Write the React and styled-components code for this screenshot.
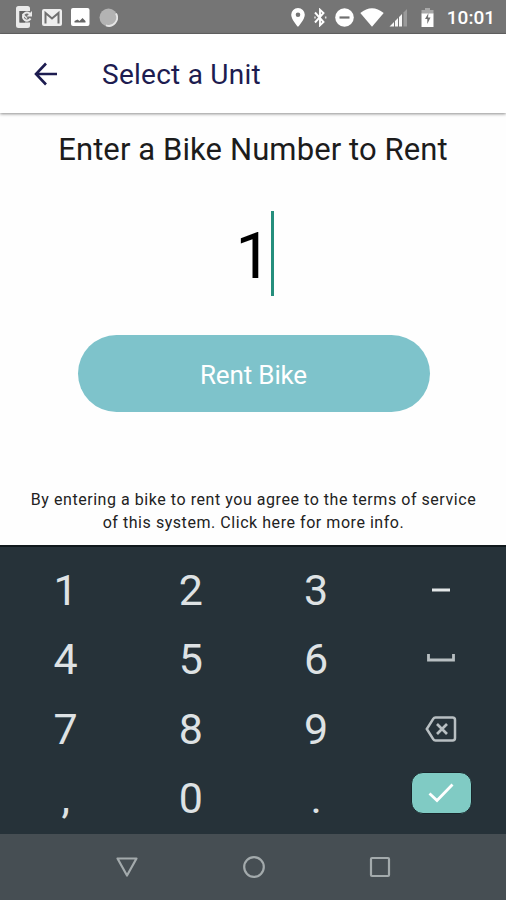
import React, {useState} from 'react'
import styled, {createGlobalStyle} from 'styled-components';

const Keys = [
  {key: '1'}, {key: '2'}, {key: '3'}, {key: 'minus'},
  {key: '4'}, {key: '5'}, {key: '6'}, {key: 'space'},
  {key: '7'}, {key: '8'}, {key: '9'}, {key: 'delete'},
  {key: ','}, {key: '0'}, {key: '.'}, {key: 'enter'}
]

const StatusBar = () => (
  <StatusWrap>
    <StatusIcons $gap='9px'>
      <svg width='17' height='22' viewBox='0 0 17 22'>
        <path d='M2.5 0H11.5Q14 0 14 2.5V5H3.5V16.5H14V19.5Q14 22 11.5 22H2.5Q0 22 0 19.5V2.5Q0 0 2.5 0Z' fill='#eaeaea' />
        <path d='M3.5 5H9V16.5H3.5Z' fill='#626262' />
        <path d='M14 8A4 4 0 1 0 14.5 12.500' fill='none' stroke='#eaeaea' strokeWidth='2' />
        <path d='M16 5V10.5H10.500Z' fill='#eaeaea' />
        <path d='M6.500 8L11 12.500' stroke='#eaeaea' strokeWidth='1.500' />
      </svg>
      <svg width='20' height='17' viewBox='0 0 20 17'>
        <rect width='20' height='17' rx='2' fill='#eee' />
        <path d='M3.500 14.500V4L10 9.500L16.500 4V14.500' fill='none' stroke='#707070' strokeWidth='2' />
      </svg>
      <svg width='19' height='18' viewBox='0 0 19 18'>
        <rect width='18.500' height='18' rx='2' fill='#fff' />
        <path d='M3.500 14.500V13L6.500 11.500L8.500 13L11.500 10L14.500 13V14.500Z' fill='#666' />
      </svg>
      <svg width='19' height='19' viewBox='0 0 19 19'>
        <circle cx='9.500' cy='9.500' r='9' fill='#b3b3b3' />
        <path d='M17 5.500A8.300 8.300 0 0 1 7 17.400' fill='none' stroke='#e6e6e6' strokeWidth='1.800' />
      </svg>
    </StatusIcons>
    <StatusIcons $gap='5px'>
      <StatusGlyph $after='3px' width='14' height='19' viewBox='0 0 14 19'>
        <path fillRule='evenodd' d='M7 0A6.800 6.800 0 0 1 13.800 6.800C13.800 11.500 7 19 7 19S.2 11.500 .2 6.800A6.800 6.800 0 0 1 7 0ZM7 4.500A2.300 2.300 0 1 0 7 9.100A2.300 2.300 0 1 0 7 4.500Z' fill='#fff' />
      </StatusGlyph>
      <StatusGlyph $after='3px' width='14' height='19' viewBox='0 0 14 19'>
        <path d='M2 4.500L10.500 14L7 17.300V1.700L10.500 5L2 14.500' fill='none' stroke='#fff' strokeWidth='1.900' />
        <path d='M2 8.500V10.500M12.700 8.500V10.500' stroke='#e5e5e5' strokeWidth='1.500' />
      </StatusGlyph>
      <StatusGlyph $after='1px' width='19' height='19' viewBox='0 0 19 19'>
        <circle cx='9.500' cy='9.500' r='9.300' fill='#fff' />
        <path d='M4.500 9.500H14.500' stroke='#6f6f6f' strokeWidth='2.200' />
      </StatusGlyph>
      <svg width='24' height='19' viewBox='0 0 24 19'>
        <path d='M.3 5Q12 -4.500 23.700 5L12 18.800Z' fill='#fff' />
      </svg>
      <StatusGlyph $after='8px' width='19' height='19' viewBox='0 0 19 19'>
        <path d='M.5 18.500L5 14V18.500ZM6 13L9 10V18.500H6ZM10 9L13 6V18.500H10Z' fill='#f7f7f7' />
        <path d='M14.500 4.500L18 1V18.500H14.500Z' fill='#9a9a9a' />
      </StatusGlyph>
      <StatusGlyph $after='8px' width='13' height='19' viewBox='0 0 13 19'>
        <path d='M4 0H9V2H12.500V6H.5V2H4Z' fill='#a8a8a8' />
        <path d='M.5 5.500H12.500V19H.5Z' fill='#fff' />
        <path d='M7.500 5L4 11H6.300V16L9.500 9.500H7Z' fill='#707070' />
      </StatusGlyph>
      <Clock>10:01</Clock>
    </StatusIcons>
  </StatusWrap>
)

const KeyLabel = ({name}) => {
  if(name === 'minus'){
    return (
      <svg width='18' height='4' viewBox='0 0 18 4'>
        <path d='M0 2H18' stroke='#e3e7e8' strokeWidth='3' />
      </svg>
    )
  }
  if(name === 'space'){
    return (
      <SpaceIcon width='28' height='8' viewBox='0 0 28 8'>
        <path d='M1.500 0V6H26.500V0' fill='none' stroke='#b8bfc2' strokeWidth='2.800' />
      </SpaceIcon>
    )
  }
  if(name === 'delete'){
    return (
      <svg width='32' height='26' viewBox='0 0 32 26'>
        <path d='M10.500 1.500H27.500Q30 1.500 30 4V22Q30 24.500 27.500 24.500H10.500Q9 24.500 8.200 23.200L1.800 13L8.200 2.800Q9 1.500 10.500 1.500Z' fill='none' stroke='#b8bfc2' strokeWidth='2.500' />
        <path d='M12 8L22 18M22 8L12 18' stroke='#b8bfc2' strokeWidth='2.700' />
      </svg>
    )
  }
  if(name === 'enter'){
    return (
      <EnterKey>
        <svg width='26' height='20' viewBox='0 0 26 20'>
          <path d='M1.500 10.500L9 17.500L24.500 1.500' fill='none' stroke='#fff' strokeWidth='2.800' />
        </svg>
      </EnterKey>
    )
  }
  return name
}

const App = () => {
  const [bike, setBike] = useState('1');

  const pressKey = (key) => {
    if(key === 'delete'){
      setBike(bike.slice(0, -1))
    } else if(key.length === 1){
      setBike(bike + key)
    }
  }

  return (
    <Screen>
      <GlobalStyle />
      <StatusBar />
      <Header>
        <svg width='24' height='24' viewBox='0 0 24 24'>
          <path d='M23 12H2.500M12 1.500L2 12L12 22.500' fill='none' stroke='#1d1c50' strokeWidth='2.600' />
        </svg>
        <h1>Select a Unit</h1>
      </Header>
      <Content>
        <h2>Enter a Bike Number to Rent</h2>
        <BikeNumber>
          <span>{bike}</span>
          <Caret />
        </BikeNumber>
        <RentButton type='button'>Rent Bike</RentButton>
        <Terms>
          By entering a bike to rent you agree to the terms of service<br />
          of this system. Click here for more info.
        </Terms>
      </Content>
      <Keypad>
        {Keys.map(({key})=>(
          <Key key={key} type='button' onClick={()=>pressKey(key)}>
            <KeyLabel name={key} />
          </Key>
        ))}
      </Keypad>
      <NavBar>
        <svg width='24' height='24' viewBox='0 0 24 24'>
          <path d='M2.500 3.500H21.500L12 20.500Z' fill='none' stroke='#a3aaac' strokeWidth='2.200' strokeLinejoin='round' />
        </svg>
        <svg width='24' height='24' viewBox='0 0 24 24'>
          <circle cx='12' cy='12' r='9.800' fill='none' stroke='#a3aaac' strokeWidth='2.200' />
        </svg>
        <svg width='24' height='24' viewBox='0 0 24 24'>
          <rect x='3' y='3' width='18' height='18' rx='1' fill='none' stroke='#a3aaac' strokeWidth='2.200' />
        </svg>
      </NavBar>
    </Screen>
  )
}

export default App

const GlobalStyle = createGlobalStyle`
  *{
    box-sizing: border-box;
  }

  body{
    margin: 0;
    background: #fff;
  }

  svg{
    display: block;
    flex: none;
  }
`;

const Screen = styled.main`
  width: 506px;
  height: 900px;
  display: flex;
  flex-direction: column;
  overflow: hidden;
  background: #fefefe;
  font-family: Roboto, 'Liberation Sans', sans-serif;
`;

const StatusWrap = styled.div`
  height: 34px;
  flex: none;
  display: flex;
  align-items: center;
  justify-content: space-between;
  padding: 1px 11px 0 16px;
  background: #757575;
  border-bottom: 1px solid #666;
`;

const StatusIcons = styled.div`
  display: flex;
  align-items: center;
  gap: ${props => props.$gap};
`;

const StatusGlyph = styled.svg`
  margin-right: ${props => props.$after};
`;

const Clock = styled.span`
  padding-top: 2px;
  color: #fff;
  font-size: 19px;
  font-weight: 500;
  line-height: 24px;
`;

const Header = styled.header`
  height: 79px;
  flex: none;
  display: flex;
  align-items: center;
  gap: 44px;
  padding: 0 34px;
  background: #fff;
  box-shadow: 0 1px 3px rgba(0, 0, 0, 0.45);

  h1{
    margin: 3px 0 0;
    color: #1d1c50;
    font-size: 28px;
    font-weight: 400;
    letter-spacing: 0.25px;
    line-height: 32px;
  }
`;

const Content = styled.section`
  height: 432px;
  flex: none;
  display: flex;
  flex-direction: column;
  align-items: center;

  h2{
    margin: 18px 0 0;
    color: #1c1c1c;
    font-size: 31px;
    font-weight: 400;
    letter-spacing: 0.1px;
    line-height: 38px;
    white-space: nowrap;
  }
`;

const BikeNumber = styled.div`
  height: 85px;
  margin: 42px 0 0 4px;
  display: flex;
  align-items: center;
  color: #000;
  font-size: 64px;
  line-height: 85px;

  span{
    padding-top: 5px;
  }
`;

const Caret = styled.i`
  width: 3px;
  height: 85px;
  background: #258e7c;
`;

const RentButton = styled.button`
  width: 352px;
  height: 77px;
  margin: 39px 0 0 1px;
  padding: 2px 0 0;
  border: none;
  border-radius: 39px;
  background: #7ec3cb;
  color: #fff;
  font-family: inherit;
  font-size: 26px;
  letter-spacing: -0.15px;
`;

const Terms = styled.p`
  margin: 76px 0 0 1px;
  color: #222;
  font-size: 16px;
  letter-spacing: 0.55px;
  line-height: 23px;
  text-align: center;
  white-space: nowrap;
`;

const Keypad = styled.section`
  height: 289px;
  flex: none;
  display: grid;
  grid-template-columns: repeat(4, 1fr);
  grid-template-rows: repeat(4, 1fr);
  padding: 8px 2px 1px 3px;
  border-top: 2px solid #11191d;
  background: #263239;
`;

const Key = styled.button`
  display: flex;
  align-items: center;
  justify-content: center;
  padding: 0;
  border: none;
  background: none;
  color: #dee2e4;
  font-family: inherit;
  font-size: 43px;
  line-height: 50px;
`;

const SpaceIcon = styled.svg`
  margin-top: -2px;
`;

const EnterKey = styled.span`
  width: 61px;
  height: 42px;
  margin-bottom: 11px;
  display: flex;
  align-items: center;
  justify-content: center;
  border: 1px solid #19262b;
  border-radius: 12px;
  background: #80cbc4;
`;

const NavBar = styled.nav`
  height: 66px;
  flex: none;
  display: flex;
  align-items: center;
  justify-content: space-between;
  padding: 0 114px 0 115px;
  background: #464e53;
`;
